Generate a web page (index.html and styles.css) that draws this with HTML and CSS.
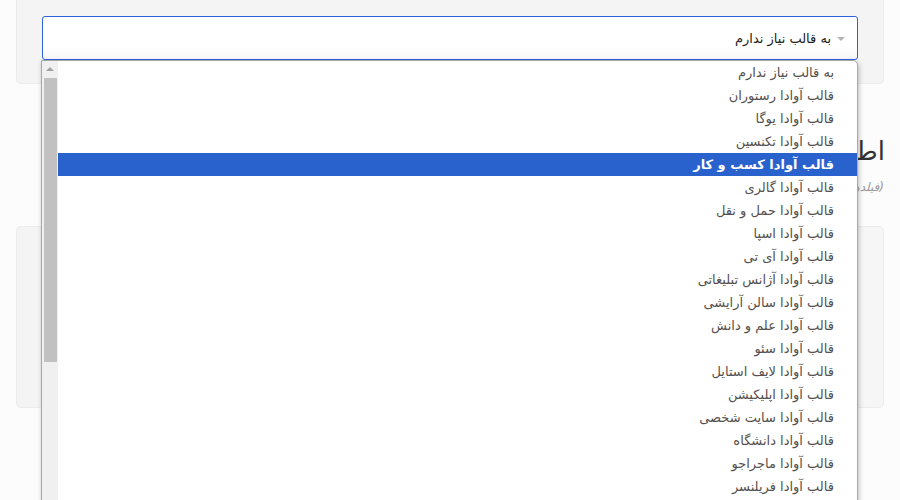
FILE: index.html
```html
<!DOCTYPE html>
<html lang="fa" dir="rtl">
<head>
<meta charset="utf-8">
<link rel="stylesheet" href="styles.css">
</head>
<body>
<div class="page">
  <div class="card top-card">
    <div class="select">
      <span class="arrow"></span>
      <span class="select-text">به قالب نیاز ندارم</span>
    </div>
  </div>
  <div class="section-head">
    <h2 class="title">اطلاعات تماس شما</h2>
    <p class="hint">(فیلدهای ستاره دار الزامی هستند)</p>
  </div>
  <div class="card bottom-card"></div>

  <div class="dropdown">
    <ul class="options">
      <li>به قالب نیاز ندارم</li>
      <li>قالب آوادا رستوران</li>
      <li>قالب آوادا یوگا</li>
      <li>قالب آوادا تکنسین</li>
      <li class="active">قالب آوادا کسب و کار</li>
      <li>قالب آوادا گالری</li>
      <li>قالب آوادا حمل و نقل</li>
      <li>قالب آوادا اسپا</li>
      <li>قالب آوادا آی تی</li>
      <li>قالب آوادا آژانس تبلیغاتی</li>
      <li>قالب آوادا سالن آرایشی</li>
      <li>قالب آوادا علم و دانش</li>
      <li>قالب آوادا سئو</li>
      <li>قالب آوادا لایف استایل</li>
      <li>قالب آوادا اپلیکیشن</li>
      <li>قالب آوادا سایت شخصی</li>
      <li>قالب آوادا دانشگاه</li>
      <li>قالب آوادا ماجراجو</li>
      <li>قالب آوادا فریلنسر</li>
    </ul>
    <div class="scrollbar">
      <span class="scroll-up"></span>
      <span class="thumb"></span>
    </div>
  </div>
</div>
</body>
</html>
```
FILE: styles.css
```css
html, body {
  margin: 0;
  padding: 0;
}
body {
  background: #fcfcfc;
  font-family: "DejaVu Sans", "Noto Sans", sans-serif;
  direction: rtl;
  width: 900px;
  height: 500px;
  overflow: hidden;
}
.page {
  position: relative;
  padding: 0 16px;
  height: 500px;
}
.card {
  background: #f4f4f4;
  border: 1px solid #ececec;
  border-radius: 5px;
}
.top-card {
  border-top: none;
  border-radius: 0 0 5px 5px;
  padding: 16px 25px 23px 25px;
}
.select {
  height: 42px;
  border: 1px solid #2d5fe3;
  border-radius: 3px;
  background: linear-gradient(#ffffff 70%, #f6f6f6);
  display: flex;
  align-items: center;
  padding-right: 12px;
  gap: 6px;
  font-size: 13px;
  color: #222;
}
.arrow {
  width: 0;
  height: 0;
  border-left: 4px solid transparent;
  border-right: 4px solid transparent;
  border-top: 4px solid #b4b4b4;
  margin-top: 1px;
}
.section-head {
  padding: 52px 0 0 0;
  height: 90px;
  margin-right: -1px;
}
.title {
  margin: 0;
  font-size: 26px;
  font-weight: 400;
  color: #333;
  line-height: 30px;
}
.hint {
  margin: 14px 0 0 0;
  padding-right: 1px;
  font-size: 12px;
  font-style: italic;
  color: #999;
}
.bottom-card {
  height: 180px;
  background: linear-gradient(90deg, #f4f4f4, #fafafa 40%, #f6f6f6);
}
.dropdown {
  position: absolute;
  left: 41px;
  top: 60px;
  width: 815px;
  height: 460px;
  background: #fff;
  border: 1px solid #a8a8a8;
  border-radius: 0 5px 0 5px;
  box-shadow: 1px 2px 5px rgba(0, 0, 0, 0.25);
  display: flex;
  overflow: hidden;
}
.options {
  list-style: none;
  margin: 0;
  padding: 0;
  flex: 1;
  font-size: 13px;
  color: #55504e;
}
.options li {
  height: 23px;
  line-height: 23px;
  padding-right: 23px;
}
.options li.active {
  background: #2a62cd;
  color: #fff;
  font-weight: 700;
}
.scrollbar {
  width: 16px;
  background: #f0f0f0;
  display: flex;
  flex-direction: column;
  align-items: center;
}
.scroll-up {
  margin-top: 6px;
  width: 0;
  height: 0;
  border-left: 4px solid transparent;
  border-right: 4px solid transparent;
  border-bottom: 4px solid #a3a3a3;
}
.thumb {
  margin-top: 7px;
  width: 13px;
  height: 284px;
  background: #c1c1c1;
}
```
